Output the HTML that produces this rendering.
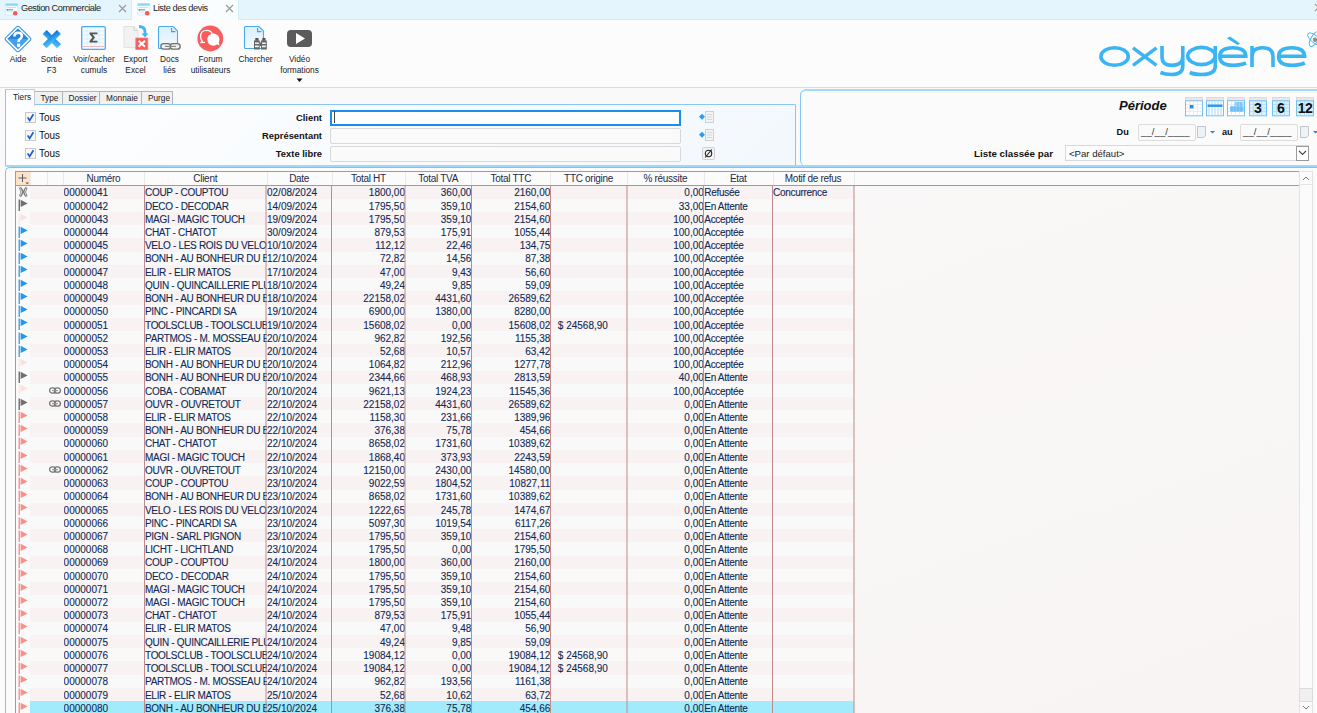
<!DOCTYPE html>
<html><head><meta charset="utf-8"><title>Liste des devis</title>
<style>
*{box-sizing:border-box;margin:0;padding:0}
html,body{width:1317px;height:713px;overflow:hidden;background:#fbfbfb;font-family:"Liberation Sans",sans-serif;color:#111;position:relative}
.a{position:absolute}
svg{display:block}
.tabstrip{left:0;top:0;width:1317px;height:20px;background:#e5f5fd;border-bottom:1px solid #d3eaf7}
.tt{font-size:8.3px;white-space:nowrap;color:#222}
.tb{left:0;top:20px;width:1317px;height:68px;background:#fcfcfc;border-bottom:1px solid #dcdcdc}
.lbl{font-size:8.3px;color:#222;text-align:center;white-space:nowrap;line-height:10.5px;padding-top:1px}
.filt{left:0;top:88px;width:1317px;height:79px;background:#f9f9f9}
.bold{font-weight:bold}
.grid{left:15px;top:171px;width:1284px;height:560px;background:linear-gradient(160deg,#faf9f9 0%,#f9f7f6 50%,#f8f4f4 100%);border:1px solid #c58a8a;border-right:none}
.hdr{font-size:10px;color:#1d2b4a;white-space:nowrap;text-align:center;letter-spacing:-0.3px}
.cell{font-size:10px;letter-spacing:0px;color:#102a55;-webkit-text-stroke:0.1px #102a55;white-space:nowrap;overflow:hidden;line-height:13px}
.r{text-align:right}
.vl{width:1px;background:#c88e8e}
.hs{width:1px;background:#e9e9e9}
</style></head><body>

<div class="a tabstrip"></div>
<div class="a" style="left:131px;top:0;width:1px;height:19px;background:#d3eaf7"></div>
<div class="a" style="left:132px;top:0;width:106px;height:20px;background:#fafdff"></div>
<div class="a" style="left:238px;top:0;width:1px;height:19px;background:#d3eaf7"></div>
<svg class="a" style="left:5px;top:3px" width="14" height="13" viewBox="0 0 14 13"><rect x="0.5" y="0.5" width="12.5" height="11.5" rx="1" fill="#f7fcff" stroke="#cdebfa" stroke-width="0.8"/><rect x="0.5" y="0.5" width="12.5" height="2.2" rx="1" fill="#86d8fb"/><rect x="2" y="4.3" width="9" height="0.7" fill="#e3c9c9"/><rect x="2" y="6.4" width="6" height="0.9" fill="#6a7a8a"/><rect x="1.6" y="6.2" width="1.3" height="1.3" fill="#1a8fe8"/><rect x="2" y="8.6" width="5" height="0.7" fill="#c8d8e8"/><circle cx="10.2" cy="10.2" r="2.3" fill="#f55a5a"/></svg>
<div class="a tt" style="left:21px;top:2.5px;font-size:9.2px;letter-spacing:-0.45px">Gestion Commerciale</div>
<svg class="a" style="left:118px;top:4.3px" width="9" height="9" viewBox="0 0 9 9"><path d="M1 1L8 8M8 1L1 8" stroke="#9a9a9a" stroke-width="1.2"/></svg>
<svg class="a" style="left:137px;top:3px" width="14" height="13" viewBox="0 0 14 13"><rect x="0.5" y="0.5" width="12.5" height="11.5" rx="1" fill="#f7fcff" stroke="#cdebfa" stroke-width="0.8"/><rect x="0.5" y="0.5" width="12.5" height="2.2" rx="1" fill="#86d8fb"/><rect x="2" y="4.3" width="9" height="0.7" fill="#e3c9c9"/><rect x="2" y="6.4" width="6" height="0.9" fill="#6a7a8a"/><rect x="1.6" y="6.2" width="1.3" height="1.3" fill="#1a8fe8"/><rect x="2" y="8.6" width="5" height="0.7" fill="#c8d8e8"/><circle cx="10.2" cy="10.2" r="2.3" fill="#f55a5a"/></svg>
<div class="a tt" style="left:153px;top:2.5px;font-size:9.2px;letter-spacing:-0.4px">Liste des devis</div>
<svg class="a" style="left:225px;top:4.3px" width="9" height="9" viewBox="0 0 9 9"><path d="M1 1L8 8M8 1L1 8" stroke="#9a9a9a" stroke-width="1.2"/></svg>
<svg class="a" style="left:1314px;top:3px" width="9" height="9" viewBox="0 0 9 9"><path d="M1 1L8 8M8 1L1 8" stroke="#9a9a9a" stroke-width="1.2"/></svg>
<div class="a tb"></div>
<svg class="a" style="left:4px;top:25px" width="28" height="28" viewBox="0 0 28 28">
 <path d="M14 1.2 Q14.8 1.2 15.4 1.8 L26.2 12.6 Q26.8 13.2 26.8 14 Q26.8 14.8 26.2 15.4 L15.4 26.2 Q14.8 26.8 14 26.8 Q13.2 26.8 12.6 26.2 L1.8 15.4 Q1.2 14.8 1.2 14 Q1.2 13.2 1.8 12.6 L12.6 1.8 Q13.2 1.2 14 1.2Z" fill="#fff" stroke="#3b97e4" stroke-width="1.1"/>
 <path d="M14 3.4 L24.6 14 L14 24.6 L3.4 14Z" fill="#47a0eb"/>
 <path d="M14 3.4 L24.6 14 L3.4 14Z" fill="#2a85d9"/>
 <path d="M10.4 11.6 Q10.4 7.8 14.2 7.8 Q17.9 7.8 17.9 11 Q17.9 13 15.8 14.2 Q14.6 14.9 14.6 16.9" fill="none" stroke="#fff" stroke-width="2.6"/>
 <rect x="13" y="18.6" width="3.2" height="3.2" fill="#fff"/>
</svg>
<svg class="a" style="left:42px;top:29.5px" width="20" height="20" viewBox="0 0 20 20">
 <defs><linearGradient id="gx" x1="0" y1="0" x2="1" y2="1"><stop offset="0" stop-color="#0670d6"/><stop offset="0.55" stop-color="#35a6f3"/><stop offset="1" stop-color="#57c8fc"/></linearGradient></defs>
 <g transform="rotate(45 9.8 9.2)" fill="url(#gx)"><rect x="-0.3" y="6.4" width="20.2" height="5.6"/><rect x="7" y="-0.9" width="5.6" height="20.2"/></g>
</svg>
<svg class="a" style="left:81px;top:26px" width="25" height="24" viewBox="0 0 25 24">
 <rect x="0.7" y="0.7" width="23.6" height="22.6" rx="1.2" fill="#f4fbff" stroke="#48aaf2" stroke-width="1.3"/>
 <g stroke="#cbe9fb" stroke-width="0.6"><path d="M2 5H23M2 9H23M2 13H23M2 17H23M6 2V21M10 2V21M14 2V21M18 2V21"/></g>
 <rect x="2" y="20" width="21" height="0.9" fill="#f3b3b3"/>
 <path d="M8.5 6.5 H16.5 V8.2 H11.5 L14 11.5 L11.5 14.8 H16.5 V16.5 H8.5 V15 L11.4 11.5 L8.5 8Z" fill="#555"/>
</svg>
<svg class="a" style="left:123px;top:25px" width="26" height="26" viewBox="0 0 26 26">
 <path d="M1 1.5 H11 L15 5.5 V22.5 H1Z" fill="#f2f2f2" stroke="#ddd" stroke-width="0.8"/>
 <path d="M11 1.5 V5.5 H15" fill="none" stroke="#ccc" stroke-width="0.8"/>
 <path d="M16 1.5 Q22 1.5 22 7 L22 9" fill="none" stroke="#47b3f5" stroke-width="2.8"/>
 <path d="M18.5 8.5 H25.5 L22 12.5Z" fill="#47b3f5"/>
 <rect x="12.8" y="13" width="12" height="11.6" fill="#f75c5c" stroke="#f98080" stroke-width="0.8"/>
 <path d="M15.6 15.8 L22 21.8 M22 15.8 L15.6 21.8" stroke="#fff" stroke-width="2.2"/>
</svg>
<svg class="a" style="left:157px;top:25px" width="26" height="26" viewBox="0 0 26 26">
 <defs><linearGradient id="gd" x1="0" y1="0" x2="0" y2="1"><stop offset="0" stop-color="#dceffb"/><stop offset="1" stop-color="#f3f9fe"/></linearGradient></defs>
 <path d="M2.5 1.5 H16 L20.5 6 V21.5 Q20.5 23.5 18.5 23.5 H2.5 Q1.5 23.5 1.5 22.5 V2.5 Q1.5 1.5 2.5 1.5Z" fill="url(#gd)" stroke="#49a9f0" stroke-width="1.1"/>
 <path d="M14.6 3 V6.6 H18.4" fill="none" stroke="#3a9cf0" stroke-width="1.1"/>
 <rect x="3.8" y="18.6" width="10" height="5.6" rx="2.8" fill="#f0f0f0" stroke="#6e6e6e" stroke-width="1.3"/>
 <rect x="13.2" y="18.6" width="10" height="5.6" rx="2.8" fill="#f0f0f0" stroke="#6e6e6e" stroke-width="1.3"/>
 <rect x="8" y="20.8" width="11" height="1.2" fill="#8a8a8a"/>
</svg>
<svg class="a" style="left:196.5px;top:25.2px" width="27" height="27" viewBox="0 0 27 27">
 <circle cx="13.3" cy="13.5" r="12.9" fill="#fa5c5e"/>
 <path d="M5.6 16.6 Q3.6 14.6 3.6 11.4 Q3.6 5.3 9.6 5.3 Q14.6 5.3 15.4 9.6" fill="none" stroke="#fff" stroke-width="1.3"/>
 <path d="M5.6 16.6 L3.4 17.6 L8 17.4" fill="none" stroke="#fff" stroke-width="1.1"/>
 <circle cx="16.4" cy="14.6" r="6.1" fill="#fff"/>
 <path d="M19.5 19 L22.6 20.6 L21.6 16.8Z" fill="#fff"/>
</svg>
<svg class="a" style="left:243px;top:25px" width="26" height="26" viewBox="0 0 26 26">
 <defs><linearGradient id="gc" x1="0" y1="0" x2="0" y2="1"><stop offset="0" stop-color="#dceffb"/><stop offset="1" stop-color="#f3f9fe"/></linearGradient></defs>
 <path d="M2.5 1.5 H16 L20.5 6 V21.5 Q20.5 23.5 18.5 23.5 H2.5 Q1.5 23.5 1.5 22.5 V2.5 Q1.5 1.5 2.5 1.5Z" fill="url(#gc)" stroke="#49a9f0" stroke-width="1.1"/>
 <path d="M14.6 3 V6.6 H18.4" fill="none" stroke="#3a9cf0" stroke-width="1.1"/>
 <rect x="12.3" y="13" width="3.2" height="2.6" fill="#555"/>
 <rect x="19.3" y="13" width="3.2" height="2.6" fill="#555"/>
 <path d="M11 16 Q11 15.3 11.8 15.3 H15.9 Q16.8 15.3 16.8 16 V24.5 H11Z" fill="#666"/>
 <path d="M18 16 Q18 15.3 18.8 15.3 H22.9 Q23.8 15.3 23.8 16 V24.5 H18Z" fill="#666"/>
 <rect x="16.8" y="17.5" width="1.2" height="3.5" fill="#666"/>
 <path d="M12 18.2H15.8M12 21.4H15.8M19 18.2H22.8M19 21.4H22.8" stroke="#f4f4f4" stroke-width="1.6"/>
</svg>
<svg class="a" style="left:287px;top:30px" width="25" height="18" viewBox="0 0 25 18">
 <rect x="0" y="0" width="25" height="17" rx="4" fill="#5b5b5b"/>
 <path d="M9 3 L18 8.5 L9 14Z" fill="#fff"/>
</svg>
<svg class="a" style="left:296px;top:78px" width="7" height="5" viewBox="0 0 7 5"><path d="M0.5 0.5H6.5L3.5 4Z" fill="#111"/></svg>
<div class="a lbl" style="left:-2px;top:53px;width:40px">Aide</div>
<div class="a lbl" style="left:31px;top:53px;width:41px">Sortie<br>F3</div>
<div class="a lbl" style="left:68px;top:53px;width:52px">Voir/cacher<br>cumuls</div>
<div class="a lbl" style="left:115px;top:53px;width:41px">Export<br>Excel</div>
<div class="a lbl" style="left:149px;top:53px;width:41px">Docs<br>liés</div>
<div class="a lbl" style="left:185px;top:53px;width:51px">Forum<br>utilisateurs</div>
<div class="a lbl" style="left:230px;top:53px;width:51px">Chercher</div>
<div class="a lbl" style="left:274px;top:53px;width:51px">Vidéo<br>formations</div>
<svg class="a" style="left:1095px;top:28px" width="222" height="52" viewBox="1095 28 222 52">
 <g fill="none" stroke="#3bb4f3" stroke-width="3.6">
  <ellipse cx="1114.6" cy="56.5" rx="13.7" ry="8.7"/>
  <path d="M1133 47.8 L1156.5 65.3 M1156.5 47.8 L1133 65.3" stroke-width="3.4"/>
  <path d="M1162 46 V56.5 Q1162 65.3 1171.5 65.3 Q1182.8 65.3 1182.8 56.5 V46 M1182.8 55 V66 Q1182.8 74.5 1171.5 74.5 Q1165 74.5 1160.5 72.5"/>
  <ellipse cx="1201.5" cy="56" rx="13.8" ry="8.6"/>
  <path d="M1215.3 46 V66 Q1215.3 74.5 1202 74.5 Q1194 74.5 1189.8 72.5"/>
  <path d="M1219.8 56.2 H1245.8 Q1245.5 47.8 1233 47.8 Q1219.8 47.8 1219.8 56.5 Q1219.8 65.3 1233 65.3 Q1241 65.3 1246 63"/>
  <path d="M1252 46 V67 M1252 56.5 Q1252 47.8 1262.5 47.8 Q1273 47.8 1273 56.5 V67"/>
  <path d="M1278.6 56.2 H1304.6 Q1304.3 47.8 1291.8 47.8 Q1278.6 47.8 1278.6 56.5 Q1278.6 65.3 1291.8 65.3 Q1299.8 65.3 1304.8 63"/>
 </g>
 <path d="M1226.8 38.2 L1230.2 36.6 L1240 43.4 L1237.6 45Z" fill="#3bb4f3"/>
 <g fill="none" stroke="#3bb4f3" stroke-width="0.9">
  <ellipse cx="1314.5" cy="39" rx="3.6" ry="8.4" transform="rotate(30 1314.5 39)"/>
  <ellipse cx="1314.5" cy="39" rx="3.6" ry="8.4" transform="rotate(-50 1314.5 39)"/>
 </g>
 <circle cx="1315" cy="39.8" r="2.2" fill="#9a8c88"/>
</svg>

<div class="a filt"></div>
<!-- tab panel -->
<div class="a" style="left:5px;top:104px;width:791px;height:62px;border:1px solid #86c8f2;border-bottom:none;border-top-right-radius:2px;background:linear-gradient(135deg,#fdfeff 0%,#f3f8fd 100%)"></div>
<div class="a" style="left:34px;top:91px;width:29px;height:14px;background:#f1f1f1;border:1px solid #adb5bd;border-bottom:1px solid #86c8f2"></div>
<div class="a" style="left:62px;top:91px;width:38px;height:14px;background:#f1f1f1;border:1px solid #adb5bd;border-bottom:1px solid #86c8f2"></div>
<div class="a" style="left:99px;top:91px;width:43px;height:14px;background:#f1f1f1;border:1px solid #adb5bd;border-bottom:1px solid #86c8f2"></div>
<div class="a" style="left:141px;top:91px;width:32px;height:14px;background:#f1f1f1;border:1px solid #adb5bd;border-bottom:1px solid #86c8f2"></div>
<div class="a" style="left:5px;top:89px;width:30px;height:17px;background:#fdfeff;border:1px solid #c5ccd3;border-bottom:none;border-left:1px solid #86c8f2"></div>
<div class="a tt" style="left:13px;top:91.5px;font-size:8.3px">Tiers</div>
<div class="a tt" style="left:35px;top:93px;width:29px;text-align:center;font-size:8.3px">Type</div>
<div class="a tt" style="left:63.5px;top:93px;width:38px;text-align:center;font-size:8.3px">Dossier</div>
<div class="a tt" style="left:100.5px;top:93px;width:43px;text-align:center;font-size:8.3px">Monnaie</div>
<div class="a tt" style="left:143px;top:93px;width:32px;text-align:center;font-size:8.3px">Purge</div>
<!-- checkboxes -->
<svg class="a" style="left:25px;top:112px" width="11" height="11" viewBox="0 0 11 11"><rect x="0.5" y="0.5" width="10" height="10" fill="#f7f7f7" stroke="#c9c9c9"/><path d="M2.6 5.4 L4.6 8.4 L8.4 2.2" fill="none" stroke="#1560c8" stroke-width="1.7"/></svg>
<svg class="a" style="left:25px;top:130px" width="11" height="11" viewBox="0 0 11 11"><rect x="0.5" y="0.5" width="10" height="10" fill="#f7f7f7" stroke="#c9c9c9"/><path d="M2.6 5.4 L4.6 8.4 L8.4 2.2" fill="none" stroke="#1560c8" stroke-width="1.7"/></svg>
<svg class="a" style="left:25px;top:148px" width="11" height="11" viewBox="0 0 11 11"><rect x="0.5" y="0.5" width="10" height="10" fill="#f7f7f7" stroke="#c9c9c9"/><path d="M2.6 5.4 L4.6 8.4 L8.4 2.2" fill="none" stroke="#1560c8" stroke-width="1.7"/></svg>
<div class="a tt" style="left:39px;top:111.5px;font-size:10px;color:#111">Tous</div>
<div class="a tt" style="left:39px;top:129.5px;font-size:10px;color:#111">Tous</div>
<div class="a tt" style="left:39px;top:147.5px;font-size:10px;color:#111">Tous</div>
<div class="a tt bold" style="left:222px;top:111.5px;width:100px;text-align:right;font-size:9.4px;color:#111">Client</div>
<div class="a tt bold" style="left:222px;top:129.5px;width:100px;text-align:right;font-size:9.4px;color:#111">Représentant</div>
<div class="a tt bold" style="left:222px;top:147.5px;width:100px;text-align:right;font-size:9.4px;color:#111">Texte libre</div>
<div class="a" style="left:330px;top:110px;width:351px;height:16px;border:2px solid #1a8ef0;background:#fff"></div>
<div class="a" style="left:334px;top:111px;width:1px;height:12px;background:#444"></div>
<div class="a" style="left:330px;top:127.5px;width:351px;height:16px;border:1px solid #d8d8d8;border-radius:2px;background:#fafafa"></div>
<div class="a" style="left:330px;top:145.5px;width:351px;height:16px;border:1px solid #d8d8d8;border-radius:2px;background:#fafafa"></div>
<svg class="a" style="left:698px;top:111px" width="17" height="12" viewBox="0 0 17 12"><rect x="7.5" y="0.5" width="8" height="11" fill="#f3f3f3" stroke="#d0d0d0"/><path d="M9 3.5H14M9 6H14M9 8.5H14" stroke="#cfcfcf" stroke-width="0.8"/><path d="M4 2.8 L7 5.8 L4 8.8 L1 5.8Z" fill="#2d9bf0"/></svg>
<svg class="a" style="left:698px;top:129px" width="17" height="12" viewBox="0 0 17 12"><rect x="7.5" y="0.5" width="8" height="11" fill="#f3f3f3" stroke="#d0d0d0"/><path d="M9 3.5H14M9 6H14M9 8.5H14" stroke="#cfcfcf" stroke-width="0.8"/><path d="M4 2.8 L7 5.8 L4 8.8 L1 5.8Z" fill="#2d9bf0"/></svg>
<svg class="a" style="left:702px;top:147px" width="13" height="13" viewBox="0 0 13 13"><rect x="0.5" y="0.5" width="12" height="12" rx="1" fill="#f3f3f3" stroke="#cfcfcf"/><circle cx="6.5" cy="6.5" r="3.2" fill="none" stroke="#222" stroke-width="1.1"/><path d="M3.2 10.5 L9.8 2.5" stroke="#222" stroke-width="1.1"/></svg>
<!-- right group -->
<div class="a" style="left:800px;top:89px;width:540px;height:77px;border:1px solid #86c8f2;border-top:2px solid #a3daf8;border-radius:6px;border-bottom:none;background:#fbfbfb"></div>
<div class="a" style="left:5px;top:165px;width:1312px;height:1.6px;background:#9fd9f7;border-bottom-left-radius:2px"></div>
<div class="a bold" style="left:1119px;top:98px;font-size:13px;font-style:italic;white-space:nowrap;color:#111">Période</div>
<!-- calendar buttons -->
<svg class="a" style="left:1185px;top:97px" width="18" height="20" viewBox="0 0 18 20"><rect x="0.5" y="0.5" width="17" height="3.2" fill="#f1e4e4" stroke="#e6d0d0" stroke-width="0.8"/><rect x="0.5" y="3.8" width="17" height="15" fill="#ffffff" stroke="#72c2f6" stroke-width="1"/><g stroke="#e2e2e2" stroke-width="0.7"><path d="M1 7.5H17M1 11H17M1 14.5H17M4.5 4V18.5M8.5 4V18.5M12.5 4V18.5"/></g><rect x="4.8" y="8" width="3.6" height="3.4" fill="#1d8ff2"/></svg>
<svg class="a" style="left:1206px;top:97px" width="18" height="20" viewBox="0 0 18 20"><rect x="0.5" y="0.5" width="17" height="3.2" fill="#f1e4e4" stroke="#e6d0d0" stroke-width="0.8"/><rect x="0.5" y="3.8" width="17" height="15" fill="#ffffff" stroke="#72c2f6" stroke-width="1"/><g stroke="#9fd6fa" stroke-width="0.9"><path d="M3 5V18M6 5V18M9 5V18M12 5V18M15 5V18"/></g><rect x="1.5" y="7.5" width="15" height="2.4" fill="#2a96f2"/><path d="M1 13H17" stroke="#cde9fb" stroke-width="0.8"/></svg>
<svg class="a" style="left:1227px;top:97px" width="18" height="20" viewBox="0 0 18 20"><rect x="0.5" y="0.5" width="17" height="3.2" fill="#f1e4e4" stroke="#e6d0d0" stroke-width="0.8"/><rect x="0.5" y="3.8" width="17" height="15" fill="#ffffff" stroke="#72c2f6" stroke-width="1"/><g stroke="#e2e2e2" stroke-width="0.7"><path d="M1 7.5H17M1 11H17M1 14.5H17M4.5 4V18.5M8.5 4V18.5M12.5 4V18.5"/></g><rect x="8.5" y="5" width="8" height="10" fill="#9fd6fa"/><rect x="3" y="9" width="5.5" height="6" fill="#9fd6fa"/><g stroke="#4fb0f5" stroke-width="0.7"><path d="M3 11H17M3 13H17M5 9V15M8 5V15M11 5V15M14 5V15"/></g></svg>
<svg class="a" style="left:1249px;top:97px" width="18" height="20" viewBox="0 0 18 20"><rect x="0.5" y="0.5" width="17" height="3.2" fill="#f1e4e4" stroke="#e6d0d0" stroke-width="0.8"/><rect x="0.5" y="3.8" width="17" height="15" fill="#d9f0fd" stroke="#72c2f6" stroke-width="1"/><g stroke="#a9dcfa" stroke-width="0.8"><path d="M1 7.5H17M1 11H17M1 14.5H17M4.5 4V18.5M8.5 4V18.5M12.5 4V18.5"/></g></svg>
<svg class="a" style="left:1272px;top:97px" width="18" height="20" viewBox="0 0 18 20"><rect x="0.5" y="0.5" width="17" height="3.2" fill="#f1e4e4" stroke="#e6d0d0" stroke-width="0.8"/><rect x="0.5" y="3.8" width="17" height="15" fill="#d9f0fd" stroke="#72c2f6" stroke-width="1"/><g stroke="#a9dcfa" stroke-width="0.8"><path d="M1 7.5H17M1 11H17M1 14.5H17M4.5 4V18.5M8.5 4V18.5M12.5 4V18.5"/></g></svg>
<svg class="a" style="left:1296px;top:97px" width="18" height="20" viewBox="0 0 18 20"><rect x="0.5" y="0.5" width="17" height="3.2" fill="#f1e4e4" stroke="#e6d0d0" stroke-width="0.8"/><rect x="0.5" y="3.8" width="17" height="15" fill="#d9f0fd" stroke="#72c2f6" stroke-width="1"/><g stroke="#a9dcfa" stroke-width="0.8"><path d="M1 7.5H17M1 11H17M1 14.5H17M4.5 4V18.5M8.5 4V18.5M12.5 4V18.5"/></g></svg>
<div class="a bold" style="left:1249px;top:99.5px;width:18px;text-align:center;font-size:14px;color:#111">3</div>
<div class="a bold" style="left:1272px;top:99.5px;width:18px;text-align:center;font-size:14px;color:#111">6</div>
<div class="a bold" style="left:1296px;top:99.5px;width:18px;text-align:center;font-size:14px;letter-spacing:-0.5px;color:#111">12</div>
<div class="a tt bold" style="left:1116.5px;top:127px;font-size:9.2px;color:#111">Du</div>
<div class="a" style="left:1138px;top:124px;width:58px;height:16.5px;border:1px solid #dcdcdc;border-radius:2px;background:#fafafa"></div>
<div class="a tt" style="left:1141px;top:126px;font-size:9.5px;color:#333;letter-spacing:0.1px">__/__/____</div>
<svg class="a" style="left:1196px;top:125px" width="20" height="14" viewBox="0 0 20 14"><path d="M1.5 1.5H9.5V10.5L7.5 12.5H1.5Z" fill="#eef3f7" stroke="#b9bfc5" stroke-width="0.9"/><path d="M14 6H19L16.5 8.5Z" fill="#2f7fd0"/></svg>
<div class="a tt bold" style="left:1222px;top:127px;font-size:9.2px;color:#111">au</div>
<div class="a" style="left:1240px;top:124px;width:58px;height:16.5px;border:1px solid #dcdcdc;border-radius:2px;background:#fafafa"></div>
<div class="a tt" style="left:1243px;top:126px;font-size:9.5px;color:#333;letter-spacing:0.1px">__/__/____</div>
<svg class="a" style="left:1299px;top:125px" width="20" height="14" viewBox="0 0 20 14"><path d="M1.5 1.5H9.5V10.5L7.5 12.5H1.5Z" fill="#eef3f7" stroke="#b9bfc5" stroke-width="0.9"/><path d="M14 6H19L16.5 8.5Z" fill="#2f7fd0"/></svg>
<div class="a tt bold" style="left:974px;top:147.5px;font-size:9.8px;color:#111">Liste classée par</div>
<div class="a" style="left:1065px;top:145px;width:244px;height:16px;border:1px solid #d8d8d8;background:#fcfcfc"></div>
<div class="a tt" style="left:1069px;top:147.5px;font-size:9.6px;color:#222">&lt;Par défaut&gt;</div>
<div class="a" style="left:1296px;top:145.5px;width:13px;height:15px;border:1px solid #9a9a9a;background:#fff"></div>
<svg class="a" style="left:1298px;top:150px" width="9" height="6" viewBox="0 0 9 6"><path d="M1 1L4.5 4.5L8 1" fill="none" stroke="#444" stroke-width="1.1"/></svg>

<div class="a" style="left:5px;top:167px;width:1400px;height:600px;border:1px solid #7cc4f2;border-radius:5px;border-right:none;border-bottom:none"></div>
<div class="a grid"></div>
<div class="a" style="left:16px;top:172px;width:1283px;height:13px;background:#fbfbfb"></div>
<div class="a" style="left:16px;top:185px;width:1283px;height:1px;background:#c58a8a"></div>
<div class="a" style="left:16px;top:172px;width:14px;height:13px;background:#fde2c6"></div>
<svg class="a" style="left:17px;top:173px" width="13" height="12" viewBox="0 0 13 12"><path d="M5.5 1V9M1.5 5H9.5" stroke="#5a6070" stroke-width="1"/><path d="M8.5 9.5H12L10.25 11.2Z" fill="#555"/></svg>
<div class="a hs" style="left:30px;top:172px;height:13px"></div>
<div class="a hs" style="left:47px;top:172px;height:13px"></div>
<div class="a hs" style="left:63px;top:172px;height:13px"></div>
<div class="a hs" style="left:144px;top:172px;height:13px"></div>
<div class="a hs" style="left:266.5px;top:172px;height:13px"></div>
<div class="a hs" style="left:331.8px;top:172px;height:13px"></div>
<div class="a hs" style="left:405px;top:172px;height:13px"></div>
<div class="a hs" style="left:471.4px;top:172px;height:13px"></div>
<div class="a hs" style="left:550.3px;top:172px;height:13px"></div>
<div class="a hs" style="left:626.8px;top:172px;height:13px"></div>
<div class="a hs" style="left:703.8px;top:172px;height:13px"></div>
<div class="a hs" style="left:772.6px;top:172px;height:13px"></div>
<div class="a hs" style="left:853.5px;top:172px;height:13px"></div>
<div class="a hdr" style="left:63px;top:172px;width:81px;line-height:13px">Numéro</div>
<div class="a hdr" style="left:144px;top:172px;width:122.5px;line-height:13px">Client</div>
<div class="a hdr" style="left:266.5px;top:172px;width:65.30000000000001px;line-height:13px">Date</div>
<div class="a hdr" style="left:331.8px;top:172px;width:73.19999999999999px;line-height:13px">Total HT</div>
<div class="a hdr" style="left:405px;top:172px;width:66.39999999999998px;line-height:13px">Total TVA</div>
<div class="a hdr" style="left:471.4px;top:172px;width:78.89999999999998px;line-height:13px">Total TTC</div>
<div class="a hdr" style="left:550.3px;top:172px;width:76.5px;line-height:13px">TTC origine</div>
<div class="a hdr" style="left:626.8px;top:172px;width:77.0px;line-height:13px">% réussite</div>
<div class="a hdr" style="left:703.8px;top:172px;width:68.80000000000007px;line-height:13px">Etat</div>
<div class="a hdr" style="left:772.6px;top:172px;width:80.89999999999998px;line-height:13px">Motif de refus</div>
<div class="a" style="left:30px;top:185.60px;width:823.5px;height:13.215px;background:#f8f2f2"></div>
<div class="a" style="left:16px;top:185.60px;width:14px;height:13.215px;background:#fafafa"></div>
<div class="a" style="left:18px;top:186.20px"><svg class="fl" width="10" height="12" viewBox="0 0 10 12"><rect x="0.6" y="0" width="1" height="3" fill="#cfd8e0"/><path d="M2.6 2.6 Q5.3 5.9 2.6 9.3 M8 2.6 Q5.3 5.9 8 9.3" fill="none" stroke="#7a7a7a" stroke-width="2.8" stroke-linecap="round"/><path d="M2.6 2.6 Q5.3 5.9 2.6 9.3 M8 2.6 Q5.3 5.9 8 9.3" fill="none" stroke="#dcdcdc" stroke-width="1" stroke-linecap="round"/></svg></div>
<div class="a cell" style="left:63.6px;top:186.40px;width:80.4px;">00000041</div>
<div class="a cell" style="left:145px;top:186.40px;width:121.5px;letter-spacing:-0.3px;">COUP - COUPTOU</div>
<div class="a cell" style="left:267.0px;top:186.40px;width:64.80000000000001px;">02/08/2024</div>
<div class="a cell r" style="left:332.8px;top:186.40px;width:72.19999999999999px">1800,00</div>
<div class="a cell r" style="left:406px;top:186.40px;width:65.39999999999998px">360,00</div>
<div class="a cell r" style="left:472.4px;top:186.40px;width:77.89999999999998px">2160,00</div>
<div class="a cell r" style="left:627.8px;top:186.40px;width:76.0px">0,00</div>
<div class="a cell" style="left:704.3px;top:186.40px;width:68.30000000000007px;letter-spacing:-0.3px;">Refusée</div>
<div class="a cell" style="left:773.1px;top:186.40px;width:80.39999999999998px;letter-spacing:-0.3px;">Concurrence</div>
<div class="a" style="left:30px;top:198.81px;width:823.5px;height:13.215px;background:#f9f9f9"></div>
<div class="a" style="left:16px;top:198.81px;width:14px;height:13.215px;background:#fafafa"></div>
<div class="a" style="left:18px;top:199.41px"><svg class="fl" width="10" height="12" viewBox="0 0 10 12"><rect x="0.6" y="0.5" width="1.2" height="11.5" fill="#555"/><path d="M2.6 0.8 L9.6 4.4 L2.6 8Z" fill="#707070"/></svg></div>
<div class="a cell" style="left:63.6px;top:199.62px;width:80.4px;">00000042</div>
<div class="a cell" style="left:145px;top:199.62px;width:121.5px;letter-spacing:-0.3px;">DECO - DECODAR</div>
<div class="a cell" style="left:267.0px;top:199.62px;width:64.80000000000001px;">14/09/2024</div>
<div class="a cell r" style="left:332.8px;top:199.62px;width:72.19999999999999px">1795,50</div>
<div class="a cell r" style="left:406px;top:199.62px;width:65.39999999999998px">359,10</div>
<div class="a cell r" style="left:472.4px;top:199.62px;width:77.89999999999998px">2154,60</div>
<div class="a cell r" style="left:627.8px;top:199.62px;width:76.0px">33,00</div>
<div class="a cell" style="left:704.3px;top:199.62px;width:68.30000000000007px;letter-spacing:-0.3px;">En Attente</div>
<div class="a" style="left:30px;top:212.03px;width:823.5px;height:13.215px;background:#f8f2f2"></div>
<div class="a" style="left:16px;top:212.03px;width:14px;height:13.215px;background:#fafafa"></div>
<div class="a" style="left:18px;top:212.63px"><svg class="fl" width="10" height="12" viewBox="0 0 10 12"><rect x="0.6" y="0.5" width="1.2" height="11.5" fill="#fde4e4"/><path d="M2.6 0.8 L9.6 4.4 L2.6 8Z" fill="#fde0de"/></svg></div>
<div class="a cell" style="left:63.6px;top:212.83px;width:80.4px;">00000043</div>
<div class="a cell" style="left:145px;top:212.83px;width:121.5px;letter-spacing:-0.3px;">MAGI - MAGIC TOUCH</div>
<div class="a cell" style="left:267.0px;top:212.83px;width:64.80000000000001px;">19/09/2024</div>
<div class="a cell r" style="left:332.8px;top:212.83px;width:72.19999999999999px">1795,50</div>
<div class="a cell r" style="left:406px;top:212.83px;width:65.39999999999998px">359,10</div>
<div class="a cell r" style="left:472.4px;top:212.83px;width:77.89999999999998px">2154,60</div>
<div class="a cell r" style="left:627.8px;top:212.83px;width:76.0px">100,00</div>
<div class="a cell" style="left:704.3px;top:212.83px;width:68.30000000000007px;letter-spacing:-0.3px;">Acceptée</div>
<div class="a" style="left:30px;top:225.25px;width:823.5px;height:13.215px;background:#f9f9f9"></div>
<div class="a" style="left:16px;top:225.25px;width:14px;height:13.215px;background:#fafafa"></div>
<div class="a" style="left:18px;top:225.84px"><svg class="fl" width="10" height="12" viewBox="0 0 10 12"><rect x="0.6" y="0.5" width="1.2" height="11.5" fill="#2a8fe0"/><path d="M2.6 0.8 L9.6 4.4 L2.6 8Z" fill="#2196f3"/></svg></div>
<div class="a cell" style="left:63.6px;top:226.05px;width:80.4px;">00000044</div>
<div class="a cell" style="left:145px;top:226.05px;width:121.5px;letter-spacing:-0.3px;">CHAT - CHATOT</div>
<div class="a cell" style="left:267.0px;top:226.05px;width:64.80000000000001px;">30/09/2024</div>
<div class="a cell r" style="left:332.8px;top:226.05px;width:72.19999999999999px">879,53</div>
<div class="a cell r" style="left:406px;top:226.05px;width:65.39999999999998px">175,91</div>
<div class="a cell r" style="left:472.4px;top:226.05px;width:77.89999999999998px">1055,44</div>
<div class="a cell r" style="left:627.8px;top:226.05px;width:76.0px">100,00</div>
<div class="a cell" style="left:704.3px;top:226.05px;width:68.30000000000007px;letter-spacing:-0.3px;">Acceptée</div>
<div class="a" style="left:30px;top:238.46px;width:823.5px;height:13.215px;background:#f8f2f2"></div>
<div class="a" style="left:16px;top:238.46px;width:14px;height:13.215px;background:#fafafa"></div>
<div class="a" style="left:18px;top:239.06px"><svg class="fl" width="10" height="12" viewBox="0 0 10 12"><rect x="0.6" y="0.5" width="1.2" height="11.5" fill="#2a8fe0"/><path d="M2.6 0.8 L9.6 4.4 L2.6 8Z" fill="#2196f3"/></svg></div>
<div class="a cell" style="left:63.6px;top:239.26px;width:80.4px;">00000045</div>
<div class="a cell" style="left:145px;top:239.26px;width:121.5px;letter-spacing:-0.3px;">VELO - LES ROIS DU VELO</div>
<div class="a cell" style="left:267.0px;top:239.26px;width:64.80000000000001px;">10/10/2024</div>
<div class="a cell r" style="left:332.8px;top:239.26px;width:72.19999999999999px">112,12</div>
<div class="a cell r" style="left:406px;top:239.26px;width:65.39999999999998px">22,46</div>
<div class="a cell r" style="left:472.4px;top:239.26px;width:77.89999999999998px">134,75</div>
<div class="a cell r" style="left:627.8px;top:239.26px;width:76.0px">100,00</div>
<div class="a cell" style="left:704.3px;top:239.26px;width:68.30000000000007px;letter-spacing:-0.3px;">Acceptée</div>
<div class="a" style="left:30px;top:251.68px;width:823.5px;height:13.215px;background:#f9f9f9"></div>
<div class="a" style="left:16px;top:251.68px;width:14px;height:13.215px;background:#fafafa"></div>
<div class="a" style="left:18px;top:252.28px"><svg class="fl" width="10" height="12" viewBox="0 0 10 12"><rect x="0.6" y="0.5" width="1.2" height="11.5" fill="#2a8fe0"/><path d="M2.6 0.8 L9.6 4.4 L2.6 8Z" fill="#2196f3"/></svg></div>
<div class="a cell" style="left:63.6px;top:252.48px;width:80.4px;">00000046</div>
<div class="a cell" style="left:145px;top:252.48px;width:121.5px;letter-spacing:-0.3px;">BONH - AU BONHEUR DU BRICOLAGE</div>
<div class="a cell" style="left:267.0px;top:252.48px;width:64.80000000000001px;">12/10/2024</div>
<div class="a cell r" style="left:332.8px;top:252.48px;width:72.19999999999999px">72,82</div>
<div class="a cell r" style="left:406px;top:252.48px;width:65.39999999999998px">14,56</div>
<div class="a cell r" style="left:472.4px;top:252.48px;width:77.89999999999998px">87,38</div>
<div class="a cell r" style="left:627.8px;top:252.48px;width:76.0px">100,00</div>
<div class="a cell" style="left:704.3px;top:252.48px;width:68.30000000000007px;letter-spacing:-0.3px;">Acceptée</div>
<div class="a" style="left:30px;top:264.89px;width:823.5px;height:13.215px;background:#f8f2f2"></div>
<div class="a" style="left:16px;top:264.89px;width:14px;height:13.215px;background:#fafafa"></div>
<div class="a" style="left:18px;top:265.49px"><svg class="fl" width="10" height="12" viewBox="0 0 10 12"><rect x="0.6" y="0.5" width="1.2" height="11.5" fill="#2a8fe0"/><path d="M2.6 0.8 L9.6 4.4 L2.6 8Z" fill="#2196f3"/></svg></div>
<div class="a cell" style="left:63.6px;top:265.69px;width:80.4px;">00000047</div>
<div class="a cell" style="left:145px;top:265.69px;width:121.5px;letter-spacing:-0.3px;">ELIR - ELIR MATOS</div>
<div class="a cell" style="left:267.0px;top:265.69px;width:64.80000000000001px;">17/10/2024</div>
<div class="a cell r" style="left:332.8px;top:265.69px;width:72.19999999999999px">47,00</div>
<div class="a cell r" style="left:406px;top:265.69px;width:65.39999999999998px">9,43</div>
<div class="a cell r" style="left:472.4px;top:265.69px;width:77.89999999999998px">56,60</div>
<div class="a cell r" style="left:627.8px;top:265.69px;width:76.0px">100,00</div>
<div class="a cell" style="left:704.3px;top:265.69px;width:68.30000000000007px;letter-spacing:-0.3px;">Acceptée</div>
<div class="a" style="left:30px;top:278.11px;width:823.5px;height:13.215px;background:#f9f9f9"></div>
<div class="a" style="left:16px;top:278.11px;width:14px;height:13.215px;background:#fafafa"></div>
<div class="a" style="left:18px;top:278.71px"><svg class="fl" width="10" height="12" viewBox="0 0 10 12"><rect x="0.6" y="0.5" width="1.2" height="11.5" fill="#2a8fe0"/><path d="M2.6 0.8 L9.6 4.4 L2.6 8Z" fill="#2196f3"/></svg></div>
<div class="a cell" style="left:63.6px;top:278.91px;width:80.4px;">00000048</div>
<div class="a cell" style="left:145px;top:278.91px;width:121.5px;letter-spacing:-0.3px;">QUIN - QUINCAILLERIE PLUS</div>
<div class="a cell" style="left:267.0px;top:278.91px;width:64.80000000000001px;">18/10/2024</div>
<div class="a cell r" style="left:332.8px;top:278.91px;width:72.19999999999999px">49,24</div>
<div class="a cell r" style="left:406px;top:278.91px;width:65.39999999999998px">9,85</div>
<div class="a cell r" style="left:472.4px;top:278.91px;width:77.89999999999998px">59,09</div>
<div class="a cell r" style="left:627.8px;top:278.91px;width:76.0px">100,00</div>
<div class="a cell" style="left:704.3px;top:278.91px;width:68.30000000000007px;letter-spacing:-0.3px;">Acceptée</div>
<div class="a" style="left:30px;top:291.32px;width:823.5px;height:13.215px;background:#f8f2f2"></div>
<div class="a" style="left:16px;top:291.32px;width:14px;height:13.215px;background:#fafafa"></div>
<div class="a" style="left:18px;top:291.92px"><svg class="fl" width="10" height="12" viewBox="0 0 10 12"><rect x="0.6" y="0.5" width="1.2" height="11.5" fill="#2a8fe0"/><path d="M2.6 0.8 L9.6 4.4 L2.6 8Z" fill="#2196f3"/></svg></div>
<div class="a cell" style="left:63.6px;top:292.12px;width:80.4px;">00000049</div>
<div class="a cell" style="left:145px;top:292.12px;width:121.5px;letter-spacing:-0.3px;">BONH - AU BONHEUR DU BRICOLAGE</div>
<div class="a cell" style="left:267.0px;top:292.12px;width:64.80000000000001px;">18/10/2024</div>
<div class="a cell r" style="left:332.8px;top:292.12px;width:72.19999999999999px">22158,02</div>
<div class="a cell r" style="left:406px;top:292.12px;width:65.39999999999998px">4431,60</div>
<div class="a cell r" style="left:472.4px;top:292.12px;width:77.89999999999998px">26589,62</div>
<div class="a cell r" style="left:627.8px;top:292.12px;width:76.0px">100,00</div>
<div class="a cell" style="left:704.3px;top:292.12px;width:68.30000000000007px;letter-spacing:-0.3px;">Acceptée</div>
<div class="a" style="left:30px;top:304.53px;width:823.5px;height:13.215px;background:#f9f9f9"></div>
<div class="a" style="left:16px;top:304.53px;width:14px;height:13.215px;background:#fafafa"></div>
<div class="a" style="left:18px;top:305.13px"><svg class="fl" width="10" height="12" viewBox="0 0 10 12"><rect x="0.6" y="0.5" width="1.2" height="11.5" fill="#2a8fe0"/><path d="M2.6 0.8 L9.6 4.4 L2.6 8Z" fill="#2196f3"/></svg></div>
<div class="a cell" style="left:63.6px;top:305.33px;width:80.4px;">00000050</div>
<div class="a cell" style="left:145px;top:305.33px;width:121.5px;letter-spacing:-0.3px;">PINC - PINCARDI SA</div>
<div class="a cell" style="left:267.0px;top:305.33px;width:64.80000000000001px;">19/10/2024</div>
<div class="a cell r" style="left:332.8px;top:305.33px;width:72.19999999999999px">6900,00</div>
<div class="a cell r" style="left:406px;top:305.33px;width:65.39999999999998px">1380,00</div>
<div class="a cell r" style="left:472.4px;top:305.33px;width:77.89999999999998px">8280,00</div>
<div class="a cell r" style="left:627.8px;top:305.33px;width:76.0px">100,00</div>
<div class="a cell" style="left:704.3px;top:305.33px;width:68.30000000000007px;letter-spacing:-0.3px;">Acceptée</div>
<div class="a" style="left:30px;top:317.75px;width:823.5px;height:13.215px;background:#f8f2f2"></div>
<div class="a" style="left:16px;top:317.75px;width:14px;height:13.215px;background:#fafafa"></div>
<div class="a" style="left:18px;top:318.35px"><svg class="fl" width="10" height="12" viewBox="0 0 10 12"><rect x="0.6" y="0.5" width="1.2" height="11.5" fill="#2a8fe0"/><path d="M2.6 0.8 L9.6 4.4 L2.6 8Z" fill="#2196f3"/></svg></div>
<div class="a cell" style="left:63.6px;top:318.55px;width:80.4px;">00000051</div>
<div class="a cell" style="left:145px;top:318.55px;width:121.5px;letter-spacing:-0.3px;">TOOLSCLUB - TOOLSCLUB</div>
<div class="a cell" style="left:267.0px;top:318.55px;width:64.80000000000001px;">19/10/2024</div>
<div class="a cell r" style="left:332.8px;top:318.55px;width:72.19999999999999px">15608,02</div>
<div class="a cell r" style="left:406px;top:318.55px;width:65.39999999999998px">0,00</div>
<div class="a cell r" style="left:472.4px;top:318.55px;width:77.89999999999998px">15608,02</div>
<div class="a cell" style="left:557.8px;top:318.55px;width:69.0px;">$ 24568,90</div>
<div class="a cell r" style="left:627.8px;top:318.55px;width:76.0px">100,00</div>
<div class="a cell" style="left:704.3px;top:318.55px;width:68.30000000000007px;letter-spacing:-0.3px;">Acceptée</div>
<div class="a" style="left:30px;top:330.97px;width:823.5px;height:13.215px;background:#f9f9f9"></div>
<div class="a" style="left:16px;top:330.97px;width:14px;height:13.215px;background:#fafafa"></div>
<div class="a" style="left:18px;top:331.57px"><svg class="fl" width="10" height="12" viewBox="0 0 10 12"><rect x="0.6" y="0.5" width="1.2" height="11.5" fill="#2a8fe0"/><path d="M2.6 0.8 L9.6 4.4 L2.6 8Z" fill="#2196f3"/></svg></div>
<div class="a cell" style="left:63.6px;top:331.77px;width:80.4px;">00000052</div>
<div class="a cell" style="left:145px;top:331.77px;width:121.5px;letter-spacing:-0.3px;">PARTMOS - M. MOSSEAU ETS</div>
<div class="a cell" style="left:267.0px;top:331.77px;width:64.80000000000001px;">20/10/2024</div>
<div class="a cell r" style="left:332.8px;top:331.77px;width:72.19999999999999px">962,82</div>
<div class="a cell r" style="left:406px;top:331.77px;width:65.39999999999998px">192,56</div>
<div class="a cell r" style="left:472.4px;top:331.77px;width:77.89999999999998px">1155,38</div>
<div class="a cell r" style="left:627.8px;top:331.77px;width:76.0px">100,00</div>
<div class="a cell" style="left:704.3px;top:331.77px;width:68.30000000000007px;letter-spacing:-0.3px;">Acceptée</div>
<div class="a" style="left:30px;top:344.18px;width:823.5px;height:13.215px;background:#f8f2f2"></div>
<div class="a" style="left:16px;top:344.18px;width:14px;height:13.215px;background:#fafafa"></div>
<div class="a" style="left:18px;top:344.78px"><svg class="fl" width="10" height="12" viewBox="0 0 10 12"><rect x="0.6" y="0.5" width="1.2" height="11.5" fill="#2a8fe0"/><path d="M2.6 0.8 L9.6 4.4 L2.6 8Z" fill="#2196f3"/></svg></div>
<div class="a cell" style="left:63.6px;top:344.98px;width:80.4px;">00000053</div>
<div class="a cell" style="left:145px;top:344.98px;width:121.5px;letter-spacing:-0.3px;">ELIR - ELIR MATOS</div>
<div class="a cell" style="left:267.0px;top:344.98px;width:64.80000000000001px;">20/10/2024</div>
<div class="a cell r" style="left:332.8px;top:344.98px;width:72.19999999999999px">52,68</div>
<div class="a cell r" style="left:406px;top:344.98px;width:65.39999999999998px">10,57</div>
<div class="a cell r" style="left:472.4px;top:344.98px;width:77.89999999999998px">63,42</div>
<div class="a cell r" style="left:627.8px;top:344.98px;width:76.0px">100,00</div>
<div class="a cell" style="left:704.3px;top:344.98px;width:68.30000000000007px;letter-spacing:-0.3px;">Acceptée</div>
<div class="a" style="left:30px;top:357.39px;width:823.5px;height:13.215px;background:#f9f9f9"></div>
<div class="a" style="left:16px;top:357.39px;width:14px;height:13.215px;background:#fafafa"></div>
<div class="a" style="left:18px;top:358.00px"><svg class="fl" width="10" height="12" viewBox="0 0 10 12"><rect x="0.6" y="0.5" width="1.2" height="11.5" fill="#fde4e4"/><path d="M2.6 0.8 L9.6 4.4 L2.6 8Z" fill="#fde0de"/></svg></div>
<div class="a cell" style="left:63.6px;top:358.19px;width:80.4px;">00000054</div>
<div class="a cell" style="left:145px;top:358.19px;width:121.5px;letter-spacing:-0.3px;">BONH - AU BONHEUR DU BRICOLAGE</div>
<div class="a cell" style="left:267.0px;top:358.19px;width:64.80000000000001px;">20/10/2024</div>
<div class="a cell r" style="left:332.8px;top:358.19px;width:72.19999999999999px">1064,82</div>
<div class="a cell r" style="left:406px;top:358.19px;width:65.39999999999998px">212,96</div>
<div class="a cell r" style="left:472.4px;top:358.19px;width:77.89999999999998px">1277,78</div>
<div class="a cell r" style="left:627.8px;top:358.19px;width:76.0px">100,00</div>
<div class="a cell" style="left:704.3px;top:358.19px;width:68.30000000000007px;letter-spacing:-0.3px;">Acceptée</div>
<div class="a" style="left:30px;top:370.61px;width:823.5px;height:13.215px;background:#f8f2f2"></div>
<div class="a" style="left:16px;top:370.61px;width:14px;height:13.215px;background:#fafafa"></div>
<div class="a" style="left:18px;top:371.21px"><svg class="fl" width="10" height="12" viewBox="0 0 10 12"><rect x="0.6" y="0.5" width="1.2" height="11.5" fill="#555"/><path d="M2.6 0.8 L9.6 4.4 L2.6 8Z" fill="#707070"/></svg></div>
<div class="a cell" style="left:63.6px;top:371.41px;width:80.4px;">00000055</div>
<div class="a cell" style="left:145px;top:371.41px;width:121.5px;letter-spacing:-0.3px;">BONH - AU BONHEUR DU BRICOLAGE</div>
<div class="a cell" style="left:267.0px;top:371.41px;width:64.80000000000001px;">20/10/2024</div>
<div class="a cell r" style="left:332.8px;top:371.41px;width:72.19999999999999px">2344,66</div>
<div class="a cell r" style="left:406px;top:371.41px;width:65.39999999999998px">468,93</div>
<div class="a cell r" style="left:472.4px;top:371.41px;width:77.89999999999998px">2813,59</div>
<div class="a cell r" style="left:627.8px;top:371.41px;width:76.0px">40,00</div>
<div class="a cell" style="left:704.3px;top:371.41px;width:68.30000000000007px;letter-spacing:-0.3px;">En Attente</div>
<div class="a" style="left:30px;top:383.82px;width:823.5px;height:13.215px;background:#f9f9f9"></div>
<div class="a" style="left:16px;top:383.82px;width:14px;height:13.215px;background:#fafafa"></div>
<div class="a" style="left:18px;top:384.43px"><svg class="fl" width="10" height="12" viewBox="0 0 10 12"><rect x="0.6" y="0.5" width="1.2" height="11.5" fill="#fde4e4"/><path d="M2.6 0.8 L9.6 4.4 L2.6 8Z" fill="#fde0de"/></svg></div>
<div class="a" style="left:49px;top:386.82px"><svg class="lk" width="12" height="7" viewBox="0 0 12 7"><rect x="0.6" y="0.8" width="6" height="5.4" rx="2.7" fill="none" stroke="#777" stroke-width="1.3"/><rect x="5.4" y="0.8" width="6" height="5.4" rx="2.7" fill="none" stroke="#777" stroke-width="1.3"/><rect x="3" y="3" width="6" height="1.2" fill="#999"/></svg></div>
<div class="a cell" style="left:63.6px;top:384.62px;width:80.4px;">00000056</div>
<div class="a cell" style="left:145px;top:384.62px;width:121.5px;letter-spacing:-0.3px;">COBA - COBAMAT</div>
<div class="a cell" style="left:267.0px;top:384.62px;width:64.80000000000001px;">20/10/2024</div>
<div class="a cell r" style="left:332.8px;top:384.62px;width:72.19999999999999px">9621,13</div>
<div class="a cell r" style="left:406px;top:384.62px;width:65.39999999999998px">1924,23</div>
<div class="a cell r" style="left:472.4px;top:384.62px;width:77.89999999999998px">11545,36</div>
<div class="a cell r" style="left:627.8px;top:384.62px;width:76.0px">100,00</div>
<div class="a cell" style="left:704.3px;top:384.62px;width:68.30000000000007px;letter-spacing:-0.3px;">Acceptée</div>
<div class="a" style="left:30px;top:397.04px;width:823.5px;height:13.215px;background:#f8f2f2"></div>
<div class="a" style="left:16px;top:397.04px;width:14px;height:13.215px;background:#fafafa"></div>
<div class="a" style="left:18px;top:397.64px"><svg class="fl" width="10" height="12" viewBox="0 0 10 12"><rect x="0.6" y="0.5" width="1.2" height="11.5" fill="#555"/><path d="M2.6 0.8 L9.6 4.4 L2.6 8Z" fill="#707070"/></svg></div>
<div class="a" style="left:49px;top:400.04px"><svg class="lk" width="12" height="7" viewBox="0 0 12 7"><rect x="0.6" y="0.8" width="6" height="5.4" rx="2.7" fill="none" stroke="#777" stroke-width="1.3"/><rect x="5.4" y="0.8" width="6" height="5.4" rx="2.7" fill="none" stroke="#777" stroke-width="1.3"/><rect x="3" y="3" width="6" height="1.2" fill="#999"/></svg></div>
<div class="a cell" style="left:63.6px;top:397.84px;width:80.4px;">00000057</div>
<div class="a cell" style="left:145px;top:397.84px;width:121.5px;letter-spacing:-0.3px;">OUVR - OUVRETOUT</div>
<div class="a cell" style="left:267.0px;top:397.84px;width:64.80000000000001px;">22/10/2024</div>
<div class="a cell r" style="left:332.8px;top:397.84px;width:72.19999999999999px">22158,02</div>
<div class="a cell r" style="left:406px;top:397.84px;width:65.39999999999998px">4431,60</div>
<div class="a cell r" style="left:472.4px;top:397.84px;width:77.89999999999998px">26589,62</div>
<div class="a cell r" style="left:627.8px;top:397.84px;width:76.0px">0,00</div>
<div class="a cell" style="left:704.3px;top:397.84px;width:68.30000000000007px;letter-spacing:-0.3px;">En Attente</div>
<div class="a" style="left:30px;top:410.25px;width:823.5px;height:13.215px;background:#f9f9f9"></div>
<div class="a" style="left:16px;top:410.25px;width:14px;height:13.215px;background:#fafafa"></div>
<div class="a" style="left:18px;top:410.86px"><svg class="fl" width="10" height="12" viewBox="0 0 10 12"><rect x="0.6" y="0.5" width="1.2" height="11.5" fill="#f77d7d"/><path d="M2.6 0.8 L9.6 4.4 L2.6 8Z" fill="#fa8f8a"/></svg></div>
<div class="a cell" style="left:63.6px;top:411.06px;width:80.4px;">00000058</div>
<div class="a cell" style="left:145px;top:411.06px;width:121.5px;letter-spacing:-0.3px;">ELIR - ELIR MATOS</div>
<div class="a cell" style="left:267.0px;top:411.06px;width:64.80000000000001px;">22/10/2024</div>
<div class="a cell r" style="left:332.8px;top:411.06px;width:72.19999999999999px">1158,30</div>
<div class="a cell r" style="left:406px;top:411.06px;width:65.39999999999998px">231,66</div>
<div class="a cell r" style="left:472.4px;top:411.06px;width:77.89999999999998px">1389,96</div>
<div class="a cell r" style="left:627.8px;top:411.06px;width:76.0px">0,00</div>
<div class="a cell" style="left:704.3px;top:411.06px;width:68.30000000000007px;letter-spacing:-0.3px;">En Attente</div>
<div class="a" style="left:30px;top:423.47px;width:823.5px;height:13.215px;background:#f8f2f2"></div>
<div class="a" style="left:16px;top:423.47px;width:14px;height:13.215px;background:#fafafa"></div>
<div class="a" style="left:18px;top:424.07px"><svg class="fl" width="10" height="12" viewBox="0 0 10 12"><rect x="0.6" y="0.5" width="1.2" height="11.5" fill="#f77d7d"/><path d="M2.6 0.8 L9.6 4.4 L2.6 8Z" fill="#fa8f8a"/></svg></div>
<div class="a cell" style="left:63.6px;top:424.27px;width:80.4px;">00000059</div>
<div class="a cell" style="left:145px;top:424.27px;width:121.5px;letter-spacing:-0.3px;">BONH - AU BONHEUR DU BRICOLAGE</div>
<div class="a cell" style="left:267.0px;top:424.27px;width:64.80000000000001px;">22/10/2024</div>
<div class="a cell r" style="left:332.8px;top:424.27px;width:72.19999999999999px">376,38</div>
<div class="a cell r" style="left:406px;top:424.27px;width:65.39999999999998px">75,78</div>
<div class="a cell r" style="left:472.4px;top:424.27px;width:77.89999999999998px">454,66</div>
<div class="a cell r" style="left:627.8px;top:424.27px;width:76.0px">0,00</div>
<div class="a cell" style="left:704.3px;top:424.27px;width:68.30000000000007px;letter-spacing:-0.3px;">En Attente</div>
<div class="a" style="left:30px;top:436.69px;width:823.5px;height:13.215px;background:#f9f9f9"></div>
<div class="a" style="left:16px;top:436.69px;width:14px;height:13.215px;background:#fafafa"></div>
<div class="a" style="left:18px;top:437.29px"><svg class="fl" width="10" height="12" viewBox="0 0 10 12"><rect x="0.6" y="0.5" width="1.2" height="11.5" fill="#f77d7d"/><path d="M2.6 0.8 L9.6 4.4 L2.6 8Z" fill="#fa8f8a"/></svg></div>
<div class="a cell" style="left:63.6px;top:437.49px;width:80.4px;">00000060</div>
<div class="a cell" style="left:145px;top:437.49px;width:121.5px;letter-spacing:-0.3px;">CHAT - CHATOT</div>
<div class="a cell" style="left:267.0px;top:437.49px;width:64.80000000000001px;">22/10/2024</div>
<div class="a cell r" style="left:332.8px;top:437.49px;width:72.19999999999999px">8658,02</div>
<div class="a cell r" style="left:406px;top:437.49px;width:65.39999999999998px">1731,60</div>
<div class="a cell r" style="left:472.4px;top:437.49px;width:77.89999999999998px">10389,62</div>
<div class="a cell r" style="left:627.8px;top:437.49px;width:76.0px">0,00</div>
<div class="a cell" style="left:704.3px;top:437.49px;width:68.30000000000007px;letter-spacing:-0.3px;">En Attente</div>
<div class="a" style="left:30px;top:449.90px;width:823.5px;height:13.215px;background:#f8f2f2"></div>
<div class="a" style="left:16px;top:449.90px;width:14px;height:13.215px;background:#fafafa"></div>
<div class="a" style="left:18px;top:450.50px"><svg class="fl" width="10" height="12" viewBox="0 0 10 12"><rect x="0.6" y="0.5" width="1.2" height="11.5" fill="#f77d7d"/><path d="M2.6 0.8 L9.6 4.4 L2.6 8Z" fill="#fa8f8a"/></svg></div>
<div class="a cell" style="left:63.6px;top:450.70px;width:80.4px;">00000061</div>
<div class="a cell" style="left:145px;top:450.70px;width:121.5px;letter-spacing:-0.3px;">MAGI - MAGIC TOUCH</div>
<div class="a cell" style="left:267.0px;top:450.70px;width:64.80000000000001px;">22/10/2024</div>
<div class="a cell r" style="left:332.8px;top:450.70px;width:72.19999999999999px">1868,40</div>
<div class="a cell r" style="left:406px;top:450.70px;width:65.39999999999998px">373,93</div>
<div class="a cell r" style="left:472.4px;top:450.70px;width:77.89999999999998px">2243,59</div>
<div class="a cell r" style="left:627.8px;top:450.70px;width:76.0px">0,00</div>
<div class="a cell" style="left:704.3px;top:450.70px;width:68.30000000000007px;letter-spacing:-0.3px;">En Attente</div>
<div class="a" style="left:30px;top:463.12px;width:823.5px;height:13.215px;background:#f9f9f9"></div>
<div class="a" style="left:16px;top:463.12px;width:14px;height:13.215px;background:#fafafa"></div>
<div class="a" style="left:18px;top:463.72px"><svg class="fl" width="10" height="12" viewBox="0 0 10 12"><rect x="0.6" y="0.5" width="1.2" height="11.5" fill="#f77d7d"/><path d="M2.6 0.8 L9.6 4.4 L2.6 8Z" fill="#fa8f8a"/></svg></div>
<div class="a" style="left:49px;top:466.12px"><svg class="lk" width="12" height="7" viewBox="0 0 12 7"><rect x="0.6" y="0.8" width="6" height="5.4" rx="2.7" fill="none" stroke="#777" stroke-width="1.3"/><rect x="5.4" y="0.8" width="6" height="5.4" rx="2.7" fill="none" stroke="#777" stroke-width="1.3"/><rect x="3" y="3" width="6" height="1.2" fill="#999"/></svg></div>
<div class="a cell" style="left:63.6px;top:463.92px;width:80.4px;">00000062</div>
<div class="a cell" style="left:145px;top:463.92px;width:121.5px;letter-spacing:-0.3px;">OUVR - OUVRETOUT</div>
<div class="a cell" style="left:267.0px;top:463.92px;width:64.80000000000001px;">23/10/2024</div>
<div class="a cell r" style="left:332.8px;top:463.92px;width:72.19999999999999px">12150,00</div>
<div class="a cell r" style="left:406px;top:463.92px;width:65.39999999999998px">2430,00</div>
<div class="a cell r" style="left:472.4px;top:463.92px;width:77.89999999999998px">14580,00</div>
<div class="a cell r" style="left:627.8px;top:463.92px;width:76.0px">0,00</div>
<div class="a cell" style="left:704.3px;top:463.92px;width:68.30000000000007px;letter-spacing:-0.3px;">En Attente</div>
<div class="a" style="left:30px;top:476.33px;width:823.5px;height:13.215px;background:#f8f2f2"></div>
<div class="a" style="left:16px;top:476.33px;width:14px;height:13.215px;background:#fafafa"></div>
<div class="a" style="left:18px;top:476.93px"><svg class="fl" width="10" height="12" viewBox="0 0 10 12"><rect x="0.6" y="0.5" width="1.2" height="11.5" fill="#f77d7d"/><path d="M2.6 0.8 L9.6 4.4 L2.6 8Z" fill="#fa8f8a"/></svg></div>
<div class="a cell" style="left:63.6px;top:477.13px;width:80.4px;">00000063</div>
<div class="a cell" style="left:145px;top:477.13px;width:121.5px;letter-spacing:-0.3px;">COUP - COUPTOU</div>
<div class="a cell" style="left:267.0px;top:477.13px;width:64.80000000000001px;">23/10/2024</div>
<div class="a cell r" style="left:332.8px;top:477.13px;width:72.19999999999999px">9022,59</div>
<div class="a cell r" style="left:406px;top:477.13px;width:65.39999999999998px">1804,52</div>
<div class="a cell r" style="left:472.4px;top:477.13px;width:77.89999999999998px">10827,11</div>
<div class="a cell r" style="left:627.8px;top:477.13px;width:76.0px">0,00</div>
<div class="a cell" style="left:704.3px;top:477.13px;width:68.30000000000007px;letter-spacing:-0.3px;">En Attente</div>
<div class="a" style="left:30px;top:489.54px;width:823.5px;height:13.215px;background:#f9f9f9"></div>
<div class="a" style="left:16px;top:489.54px;width:14px;height:13.215px;background:#fafafa"></div>
<div class="a" style="left:18px;top:490.14px"><svg class="fl" width="10" height="12" viewBox="0 0 10 12"><rect x="0.6" y="0.5" width="1.2" height="11.5" fill="#f77d7d"/><path d="M2.6 0.8 L9.6 4.4 L2.6 8Z" fill="#fa8f8a"/></svg></div>
<div class="a cell" style="left:63.6px;top:490.34px;width:80.4px;">00000064</div>
<div class="a cell" style="left:145px;top:490.34px;width:121.5px;letter-spacing:-0.3px;">BONH - AU BONHEUR DU BRICOLAGE</div>
<div class="a cell" style="left:267.0px;top:490.34px;width:64.80000000000001px;">23/10/2024</div>
<div class="a cell r" style="left:332.8px;top:490.34px;width:72.19999999999999px">8658,02</div>
<div class="a cell r" style="left:406px;top:490.34px;width:65.39999999999998px">1731,60</div>
<div class="a cell r" style="left:472.4px;top:490.34px;width:77.89999999999998px">10389,62</div>
<div class="a cell r" style="left:627.8px;top:490.34px;width:76.0px">0,00</div>
<div class="a cell" style="left:704.3px;top:490.34px;width:68.30000000000007px;letter-spacing:-0.3px;">En Attente</div>
<div class="a" style="left:30px;top:502.76px;width:823.5px;height:13.215px;background:#f8f2f2"></div>
<div class="a" style="left:16px;top:502.76px;width:14px;height:13.215px;background:#fafafa"></div>
<div class="a" style="left:18px;top:503.36px"><svg class="fl" width="10" height="12" viewBox="0 0 10 12"><rect x="0.6" y="0.5" width="1.2" height="11.5" fill="#f77d7d"/><path d="M2.6 0.8 L9.6 4.4 L2.6 8Z" fill="#fa8f8a"/></svg></div>
<div class="a cell" style="left:63.6px;top:503.56px;width:80.4px;">00000065</div>
<div class="a cell" style="left:145px;top:503.56px;width:121.5px;letter-spacing:-0.3px;">VELO - LES ROIS DU VELO</div>
<div class="a cell" style="left:267.0px;top:503.56px;width:64.80000000000001px;">23/10/2024</div>
<div class="a cell r" style="left:332.8px;top:503.56px;width:72.19999999999999px">1222,65</div>
<div class="a cell r" style="left:406px;top:503.56px;width:65.39999999999998px">245,78</div>
<div class="a cell r" style="left:472.4px;top:503.56px;width:77.89999999999998px">1474,67</div>
<div class="a cell r" style="left:627.8px;top:503.56px;width:76.0px">0,00</div>
<div class="a cell" style="left:704.3px;top:503.56px;width:68.30000000000007px;letter-spacing:-0.3px;">En Attente</div>
<div class="a" style="left:30px;top:515.98px;width:823.5px;height:13.215px;background:#f9f9f9"></div>
<div class="a" style="left:16px;top:515.98px;width:14px;height:13.215px;background:#fafafa"></div>
<div class="a" style="left:18px;top:516.58px"><svg class="fl" width="10" height="12" viewBox="0 0 10 12"><rect x="0.6" y="0.5" width="1.2" height="11.5" fill="#f77d7d"/><path d="M2.6 0.8 L9.6 4.4 L2.6 8Z" fill="#fa8f8a"/></svg></div>
<div class="a cell" style="left:63.6px;top:516.77px;width:80.4px;">00000066</div>
<div class="a cell" style="left:145px;top:516.77px;width:121.5px;letter-spacing:-0.3px;">PINC - PINCARDI SA</div>
<div class="a cell" style="left:267.0px;top:516.77px;width:64.80000000000001px;">23/10/2024</div>
<div class="a cell r" style="left:332.8px;top:516.77px;width:72.19999999999999px">5097,30</div>
<div class="a cell r" style="left:406px;top:516.77px;width:65.39999999999998px">1019,54</div>
<div class="a cell r" style="left:472.4px;top:516.77px;width:77.89999999999998px">6117,26</div>
<div class="a cell r" style="left:627.8px;top:516.77px;width:76.0px">0,00</div>
<div class="a cell" style="left:704.3px;top:516.77px;width:68.30000000000007px;letter-spacing:-0.3px;">En Attente</div>
<div class="a" style="left:30px;top:529.19px;width:823.5px;height:13.215px;background:#f8f2f2"></div>
<div class="a" style="left:16px;top:529.19px;width:14px;height:13.215px;background:#fafafa"></div>
<div class="a" style="left:18px;top:529.79px"><svg class="fl" width="10" height="12" viewBox="0 0 10 12"><rect x="0.6" y="0.5" width="1.2" height="11.5" fill="#f77d7d"/><path d="M2.6 0.8 L9.6 4.4 L2.6 8Z" fill="#fa8f8a"/></svg></div>
<div class="a cell" style="left:63.6px;top:529.99px;width:80.4px;">00000067</div>
<div class="a cell" style="left:145px;top:529.99px;width:121.5px;letter-spacing:-0.3px;">PIGN - SARL PIGNON</div>
<div class="a cell" style="left:267.0px;top:529.99px;width:64.80000000000001px;">23/10/2024</div>
<div class="a cell r" style="left:332.8px;top:529.99px;width:72.19999999999999px">1795,50</div>
<div class="a cell r" style="left:406px;top:529.99px;width:65.39999999999998px">359,10</div>
<div class="a cell r" style="left:472.4px;top:529.99px;width:77.89999999999998px">2154,60</div>
<div class="a cell r" style="left:627.8px;top:529.99px;width:76.0px">0,00</div>
<div class="a cell" style="left:704.3px;top:529.99px;width:68.30000000000007px;letter-spacing:-0.3px;">En Attente</div>
<div class="a" style="left:30px;top:542.40px;width:823.5px;height:13.215px;background:#f9f9f9"></div>
<div class="a" style="left:16px;top:542.40px;width:14px;height:13.215px;background:#fafafa"></div>
<div class="a" style="left:18px;top:543.00px"><svg class="fl" width="10" height="12" viewBox="0 0 10 12"><rect x="0.6" y="0.5" width="1.2" height="11.5" fill="#f77d7d"/><path d="M2.6 0.8 L9.6 4.4 L2.6 8Z" fill="#fa8f8a"/></svg></div>
<div class="a cell" style="left:63.6px;top:543.20px;width:80.4px;">00000068</div>
<div class="a cell" style="left:145px;top:543.20px;width:121.5px;letter-spacing:-0.3px;">LICHT - LICHTLAND</div>
<div class="a cell" style="left:267.0px;top:543.20px;width:64.80000000000001px;">23/10/2024</div>
<div class="a cell r" style="left:332.8px;top:543.20px;width:72.19999999999999px">1795,50</div>
<div class="a cell r" style="left:406px;top:543.20px;width:65.39999999999998px">0,00</div>
<div class="a cell r" style="left:472.4px;top:543.20px;width:77.89999999999998px">1795,50</div>
<div class="a cell r" style="left:627.8px;top:543.20px;width:76.0px">0,00</div>
<div class="a cell" style="left:704.3px;top:543.20px;width:68.30000000000007px;letter-spacing:-0.3px;">En Attente</div>
<div class="a" style="left:30px;top:555.62px;width:823.5px;height:13.215px;background:#f8f2f2"></div>
<div class="a" style="left:16px;top:555.62px;width:14px;height:13.215px;background:#fafafa"></div>
<div class="a" style="left:18px;top:556.22px"><svg class="fl" width="10" height="12" viewBox="0 0 10 12"><rect x="0.6" y="0.5" width="1.2" height="11.5" fill="#f77d7d"/><path d="M2.6 0.8 L9.6 4.4 L2.6 8Z" fill="#fa8f8a"/></svg></div>
<div class="a cell" style="left:63.6px;top:556.42px;width:80.4px;">00000069</div>
<div class="a cell" style="left:145px;top:556.42px;width:121.5px;letter-spacing:-0.3px;">COUP - COUPTOU</div>
<div class="a cell" style="left:267.0px;top:556.42px;width:64.80000000000001px;">24/10/2024</div>
<div class="a cell r" style="left:332.8px;top:556.42px;width:72.19999999999999px">1800,00</div>
<div class="a cell r" style="left:406px;top:556.42px;width:65.39999999999998px">360,00</div>
<div class="a cell r" style="left:472.4px;top:556.42px;width:77.89999999999998px">2160,00</div>
<div class="a cell r" style="left:627.8px;top:556.42px;width:76.0px">0,00</div>
<div class="a cell" style="left:704.3px;top:556.42px;width:68.30000000000007px;letter-spacing:-0.3px;">En Attente</div>
<div class="a" style="left:30px;top:568.84px;width:823.5px;height:13.215px;background:#f9f9f9"></div>
<div class="a" style="left:16px;top:568.84px;width:14px;height:13.215px;background:#fafafa"></div>
<div class="a" style="left:18px;top:569.44px"><svg class="fl" width="10" height="12" viewBox="0 0 10 12"><rect x="0.6" y="0.5" width="1.2" height="11.5" fill="#f77d7d"/><path d="M2.6 0.8 L9.6 4.4 L2.6 8Z" fill="#fa8f8a"/></svg></div>
<div class="a cell" style="left:63.6px;top:569.63px;width:80.4px;">00000070</div>
<div class="a cell" style="left:145px;top:569.63px;width:121.5px;letter-spacing:-0.3px;">DECO - DECODAR</div>
<div class="a cell" style="left:267.0px;top:569.63px;width:64.80000000000001px;">24/10/2024</div>
<div class="a cell r" style="left:332.8px;top:569.63px;width:72.19999999999999px">1795,50</div>
<div class="a cell r" style="left:406px;top:569.63px;width:65.39999999999998px">359,10</div>
<div class="a cell r" style="left:472.4px;top:569.63px;width:77.89999999999998px">2154,60</div>
<div class="a cell r" style="left:627.8px;top:569.63px;width:76.0px">0,00</div>
<div class="a cell" style="left:704.3px;top:569.63px;width:68.30000000000007px;letter-spacing:-0.3px;">En Attente</div>
<div class="a" style="left:30px;top:582.05px;width:823.5px;height:13.215px;background:#f8f2f2"></div>
<div class="a" style="left:16px;top:582.05px;width:14px;height:13.215px;background:#fafafa"></div>
<div class="a" style="left:18px;top:582.65px"><svg class="fl" width="10" height="12" viewBox="0 0 10 12"><rect x="0.6" y="0.5" width="1.2" height="11.5" fill="#f77d7d"/><path d="M2.6 0.8 L9.6 4.4 L2.6 8Z" fill="#fa8f8a"/></svg></div>
<div class="a cell" style="left:63.6px;top:582.85px;width:80.4px;">00000071</div>
<div class="a cell" style="left:145px;top:582.85px;width:121.5px;letter-spacing:-0.3px;">MAGI - MAGIC TOUCH</div>
<div class="a cell" style="left:267.0px;top:582.85px;width:64.80000000000001px;">24/10/2024</div>
<div class="a cell r" style="left:332.8px;top:582.85px;width:72.19999999999999px">1795,50</div>
<div class="a cell r" style="left:406px;top:582.85px;width:65.39999999999998px">359,10</div>
<div class="a cell r" style="left:472.4px;top:582.85px;width:77.89999999999998px">2154,60</div>
<div class="a cell r" style="left:627.8px;top:582.85px;width:76.0px">0,00</div>
<div class="a cell" style="left:704.3px;top:582.85px;width:68.30000000000007px;letter-spacing:-0.3px;">En Attente</div>
<div class="a" style="left:30px;top:595.26px;width:823.5px;height:13.215px;background:#f9f9f9"></div>
<div class="a" style="left:16px;top:595.26px;width:14px;height:13.215px;background:#fafafa"></div>
<div class="a" style="left:18px;top:595.87px"><svg class="fl" width="10" height="12" viewBox="0 0 10 12"><rect x="0.6" y="0.5" width="1.2" height="11.5" fill="#f77d7d"/><path d="M2.6 0.8 L9.6 4.4 L2.6 8Z" fill="#fa8f8a"/></svg></div>
<div class="a cell" style="left:63.6px;top:596.06px;width:80.4px;">00000072</div>
<div class="a cell" style="left:145px;top:596.06px;width:121.5px;letter-spacing:-0.3px;">MAGI - MAGIC TOUCH</div>
<div class="a cell" style="left:267.0px;top:596.06px;width:64.80000000000001px;">24/10/2024</div>
<div class="a cell r" style="left:332.8px;top:596.06px;width:72.19999999999999px">1795,50</div>
<div class="a cell r" style="left:406px;top:596.06px;width:65.39999999999998px">359,10</div>
<div class="a cell r" style="left:472.4px;top:596.06px;width:77.89999999999998px">2154,60</div>
<div class="a cell r" style="left:627.8px;top:596.06px;width:76.0px">0,00</div>
<div class="a cell" style="left:704.3px;top:596.06px;width:68.30000000000007px;letter-spacing:-0.3px;">En Attente</div>
<div class="a" style="left:30px;top:608.48px;width:823.5px;height:13.215px;background:#f8f2f2"></div>
<div class="a" style="left:16px;top:608.48px;width:14px;height:13.215px;background:#fafafa"></div>
<div class="a" style="left:18px;top:609.08px"><svg class="fl" width="10" height="12" viewBox="0 0 10 12"><rect x="0.6" y="0.5" width="1.2" height="11.5" fill="#f77d7d"/><path d="M2.6 0.8 L9.6 4.4 L2.6 8Z" fill="#fa8f8a"/></svg></div>
<div class="a cell" style="left:63.6px;top:609.28px;width:80.4px;">00000073</div>
<div class="a cell" style="left:145px;top:609.28px;width:121.5px;letter-spacing:-0.3px;">CHAT - CHATOT</div>
<div class="a cell" style="left:267.0px;top:609.28px;width:64.80000000000001px;">24/10/2024</div>
<div class="a cell r" style="left:332.8px;top:609.28px;width:72.19999999999999px">879,53</div>
<div class="a cell r" style="left:406px;top:609.28px;width:65.39999999999998px">175,91</div>
<div class="a cell r" style="left:472.4px;top:609.28px;width:77.89999999999998px">1055,44</div>
<div class="a cell r" style="left:627.8px;top:609.28px;width:76.0px">0,00</div>
<div class="a cell" style="left:704.3px;top:609.28px;width:68.30000000000007px;letter-spacing:-0.3px;">En Attente</div>
<div class="a" style="left:30px;top:621.69px;width:823.5px;height:13.215px;background:#f9f9f9"></div>
<div class="a" style="left:16px;top:621.69px;width:14px;height:13.215px;background:#fafafa"></div>
<div class="a" style="left:18px;top:622.29px"><svg class="fl" width="10" height="12" viewBox="0 0 10 12"><rect x="0.6" y="0.5" width="1.2" height="11.5" fill="#f77d7d"/><path d="M2.6 0.8 L9.6 4.4 L2.6 8Z" fill="#fa8f8a"/></svg></div>
<div class="a cell" style="left:63.6px;top:622.49px;width:80.4px;">00000074</div>
<div class="a cell" style="left:145px;top:622.49px;width:121.5px;letter-spacing:-0.3px;">ELIR - ELIR MATOS</div>
<div class="a cell" style="left:267.0px;top:622.49px;width:64.80000000000001px;">24/10/2024</div>
<div class="a cell r" style="left:332.8px;top:622.49px;width:72.19999999999999px">47,00</div>
<div class="a cell r" style="left:406px;top:622.49px;width:65.39999999999998px">9,48</div>
<div class="a cell r" style="left:472.4px;top:622.49px;width:77.89999999999998px">56,90</div>
<div class="a cell r" style="left:627.8px;top:622.49px;width:76.0px">0,00</div>
<div class="a cell" style="left:704.3px;top:622.49px;width:68.30000000000007px;letter-spacing:-0.3px;">En Attente</div>
<div class="a" style="left:30px;top:634.91px;width:823.5px;height:13.215px;background:#f8f2f2"></div>
<div class="a" style="left:16px;top:634.91px;width:14px;height:13.215px;background:#fafafa"></div>
<div class="a" style="left:18px;top:635.51px"><svg class="fl" width="10" height="12" viewBox="0 0 10 12"><rect x="0.6" y="0.5" width="1.2" height="11.5" fill="#f77d7d"/><path d="M2.6 0.8 L9.6 4.4 L2.6 8Z" fill="#fa8f8a"/></svg></div>
<div class="a cell" style="left:63.6px;top:635.71px;width:80.4px;">00000075</div>
<div class="a cell" style="left:145px;top:635.71px;width:121.5px;letter-spacing:-0.3px;">QUIN - QUINCAILLERIE PLUS</div>
<div class="a cell" style="left:267.0px;top:635.71px;width:64.80000000000001px;">24/10/2024</div>
<div class="a cell r" style="left:332.8px;top:635.71px;width:72.19999999999999px">49,24</div>
<div class="a cell r" style="left:406px;top:635.71px;width:65.39999999999998px">9,85</div>
<div class="a cell r" style="left:472.4px;top:635.71px;width:77.89999999999998px">59,09</div>
<div class="a cell r" style="left:627.8px;top:635.71px;width:76.0px">0,00</div>
<div class="a cell" style="left:704.3px;top:635.71px;width:68.30000000000007px;letter-spacing:-0.3px;">En Attente</div>
<div class="a" style="left:30px;top:648.12px;width:823.5px;height:13.215px;background:#f9f9f9"></div>
<div class="a" style="left:16px;top:648.12px;width:14px;height:13.215px;background:#fafafa"></div>
<div class="a" style="left:18px;top:648.73px"><svg class="fl" width="10" height="12" viewBox="0 0 10 12"><rect x="0.6" y="0.5" width="1.2" height="11.5" fill="#f77d7d"/><path d="M2.6 0.8 L9.6 4.4 L2.6 8Z" fill="#fa8f8a"/></svg></div>
<div class="a cell" style="left:63.6px;top:648.92px;width:80.4px;">00000076</div>
<div class="a cell" style="left:145px;top:648.92px;width:121.5px;letter-spacing:-0.3px;">TOOLSCLUB - TOOLSCLUB</div>
<div class="a cell" style="left:267.0px;top:648.92px;width:64.80000000000001px;">24/10/2024</div>
<div class="a cell r" style="left:332.8px;top:648.92px;width:72.19999999999999px">19084,12</div>
<div class="a cell r" style="left:406px;top:648.92px;width:65.39999999999998px">0,00</div>
<div class="a cell r" style="left:472.4px;top:648.92px;width:77.89999999999998px">19084,12</div>
<div class="a cell" style="left:557.8px;top:648.92px;width:69.0px;">$ 24568,90</div>
<div class="a cell r" style="left:627.8px;top:648.92px;width:76.0px">0,00</div>
<div class="a cell" style="left:704.3px;top:648.92px;width:68.30000000000007px;letter-spacing:-0.3px;">En Attente</div>
<div class="a" style="left:30px;top:661.34px;width:823.5px;height:13.215px;background:#f8f2f2"></div>
<div class="a" style="left:16px;top:661.34px;width:14px;height:13.215px;background:#fafafa"></div>
<div class="a" style="left:18px;top:661.94px"><svg class="fl" width="10" height="12" viewBox="0 0 10 12"><rect x="0.6" y="0.5" width="1.2" height="11.5" fill="#f77d7d"/><path d="M2.6 0.8 L9.6 4.4 L2.6 8Z" fill="#fa8f8a"/></svg></div>
<div class="a cell" style="left:63.6px;top:662.14px;width:80.4px;">00000077</div>
<div class="a cell" style="left:145px;top:662.14px;width:121.5px;letter-spacing:-0.3px;">TOOLSCLUB - TOOLSCLUB</div>
<div class="a cell" style="left:267.0px;top:662.14px;width:64.80000000000001px;">24/10/2024</div>
<div class="a cell r" style="left:332.8px;top:662.14px;width:72.19999999999999px">19084,12</div>
<div class="a cell r" style="left:406px;top:662.14px;width:65.39999999999998px">0,00</div>
<div class="a cell r" style="left:472.4px;top:662.14px;width:77.89999999999998px">19084,12</div>
<div class="a cell" style="left:557.8px;top:662.14px;width:69.0px;">$ 24568,90</div>
<div class="a cell r" style="left:627.8px;top:662.14px;width:76.0px">0,00</div>
<div class="a cell" style="left:704.3px;top:662.14px;width:68.30000000000007px;letter-spacing:-0.3px;">En Attente</div>
<div class="a" style="left:30px;top:674.55px;width:823.5px;height:13.215px;background:#f9f9f9"></div>
<div class="a" style="left:16px;top:674.55px;width:14px;height:13.215px;background:#fafafa"></div>
<div class="a" style="left:18px;top:675.15px"><svg class="fl" width="10" height="12" viewBox="0 0 10 12"><rect x="0.6" y="0.5" width="1.2" height="11.5" fill="#f77d7d"/><path d="M2.6 0.8 L9.6 4.4 L2.6 8Z" fill="#fa8f8a"/></svg></div>
<div class="a cell" style="left:63.6px;top:675.35px;width:80.4px;">00000078</div>
<div class="a cell" style="left:145px;top:675.35px;width:121.5px;letter-spacing:-0.3px;">PARTMOS - M. MOSSEAU ETS</div>
<div class="a cell" style="left:267.0px;top:675.35px;width:64.80000000000001px;">24/10/2024</div>
<div class="a cell r" style="left:332.8px;top:675.35px;width:72.19999999999999px">962,82</div>
<div class="a cell r" style="left:406px;top:675.35px;width:65.39999999999998px">193,56</div>
<div class="a cell r" style="left:472.4px;top:675.35px;width:77.89999999999998px">1161,38</div>
<div class="a cell r" style="left:627.8px;top:675.35px;width:76.0px">0,00</div>
<div class="a cell" style="left:704.3px;top:675.35px;width:68.30000000000007px;letter-spacing:-0.3px;">En Attente</div>
<div class="a" style="left:30px;top:687.77px;width:823.5px;height:13.215px;background:#f8f2f2"></div>
<div class="a" style="left:16px;top:687.77px;width:14px;height:13.215px;background:#fafafa"></div>
<div class="a" style="left:18px;top:688.37px"><svg class="fl" width="10" height="12" viewBox="0 0 10 12"><rect x="0.6" y="0.5" width="1.2" height="11.5" fill="#f77d7d"/><path d="M2.6 0.8 L9.6 4.4 L2.6 8Z" fill="#fa8f8a"/></svg></div>
<div class="a cell" style="left:63.6px;top:688.57px;width:80.4px;">00000079</div>
<div class="a cell" style="left:145px;top:688.57px;width:121.5px;letter-spacing:-0.3px;">ELIR - ELIR MATOS</div>
<div class="a cell" style="left:267.0px;top:688.57px;width:64.80000000000001px;">25/10/2024</div>
<div class="a cell r" style="left:332.8px;top:688.57px;width:72.19999999999999px">52,68</div>
<div class="a cell r" style="left:406px;top:688.57px;width:65.39999999999998px">10,62</div>
<div class="a cell r" style="left:472.4px;top:688.57px;width:77.89999999999998px">63,72</div>
<div class="a cell r" style="left:627.8px;top:688.57px;width:76.0px">0,00</div>
<div class="a cell" style="left:704.3px;top:688.57px;width:68.30000000000007px;letter-spacing:-0.3px;">En Attente</div>
<div class="a" style="left:30px;top:700.99px;width:823.5px;height:13.215px;background:#a1ebfd"></div>
<div class="a" style="left:16px;top:700.99px;width:14px;height:13.215px;background:#fafafa"></div>
<div class="a" style="left:18px;top:701.59px"><svg class="fl" width="10" height="12" viewBox="0 0 10 12"><rect x="0.6" y="0.5" width="1.2" height="11.5" fill="#f77d7d"/><path d="M2.6 0.8 L9.6 4.4 L2.6 8Z" fill="#fa8f8a"/></svg></div>
<div class="a cell" style="left:63.6px;top:701.78px;width:80.4px;">00000080</div>
<div class="a cell" style="left:145px;top:701.78px;width:121.5px;letter-spacing:-0.3px;">BONH - AU BONHEUR DU BRICOLAGE</div>
<div class="a cell" style="left:267.0px;top:701.78px;width:64.80000000000001px;">25/10/2024</div>
<div class="a cell r" style="left:332.8px;top:701.78px;width:72.19999999999999px">376,38</div>
<div class="a cell r" style="left:406px;top:701.78px;width:65.39999999999998px">75,78</div>
<div class="a cell r" style="left:472.4px;top:701.78px;width:77.89999999999998px">454,66</div>
<div class="a cell r" style="left:627.8px;top:701.78px;width:76.0px">0,00</div>
<div class="a cell" style="left:704.3px;top:701.78px;width:68.30000000000007px;letter-spacing:-0.3px;">En Attente</div>
<svg class="a" style="left:0;top:186px" width="1317" height="530"><line x1="144.5" y1="0" x2="144.5" y2="530" stroke="#c08a8a" stroke-width="1"/><line x1="266" y1="0" x2="266" y2="530" stroke="#c08a8a" stroke-width="1"/><line x1="331.5" y1="0" x2="331.5" y2="530" stroke="#c08a8a" stroke-width="1"/><line x1="405" y1="0" x2="405" y2="530" stroke="#c08a8a" stroke-width="1"/><line x1="471.5" y1="0" x2="471.5" y2="530" stroke="#c08a8a" stroke-width="1"/><line x1="550.5" y1="0" x2="550.5" y2="530" stroke="#c08a8a" stroke-width="1"/><line x1="627" y1="0" x2="627" y2="530" stroke="#c08a8a" stroke-width="1"/><line x1="703.5" y1="0" x2="703.5" y2="530" stroke="#c08a8a" stroke-width="1"/><line x1="772.5" y1="0" x2="772.5" y2="530" stroke="#c08a8a" stroke-width="1"/><line x1="854" y1="0" x2="854" y2="530" stroke="#c08a8a" stroke-width="1"/></svg>
<div class="a" style="left:1299px;top:171px;width:14px;height:545px;background:#fbfbfb;border:1px solid #e3e3e3;border-bottom:none"></div>
<div class="a" style="left:1299px;top:184px;width:14px;height:1px;background:#e5e5e5"></div>
<svg class="a" style="left:1302px;top:175px" width="8" height="6" viewBox="0 0 8 6"><path d="M1 5L4 2L7 5" fill="none" stroke="#7a7a7a" stroke-width="1"/></svg>
<div class="a" style="left:1299px;top:688px;width:14px;height:14px;background:#f0f0f0;border:1px solid #dcdcdc"></div>
<svg class="a" style="left:1302px;top:705px" width="8" height="6" viewBox="0 0 8 6"><path d="M1 1L4 4L7 1" fill="none" stroke="#7a7a7a" stroke-width="1"/></svg>
</body></html>
